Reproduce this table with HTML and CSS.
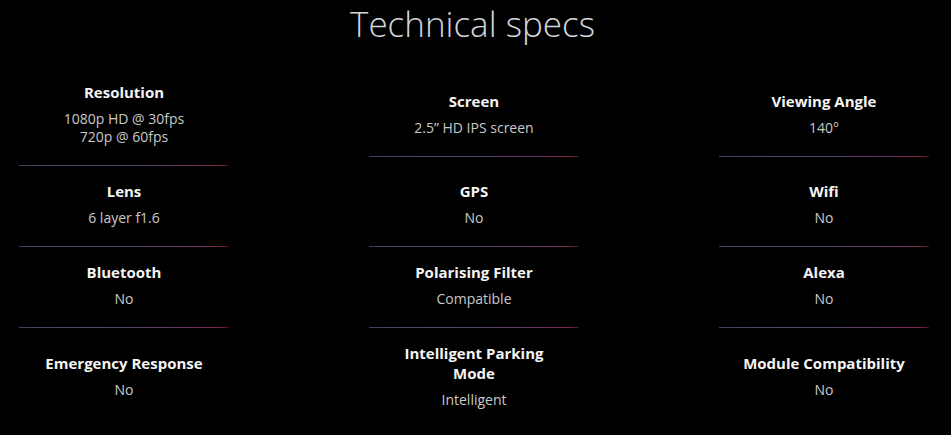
FILE: index.html
```html
<!DOCTYPE html>
<html lang="en">

<head>
    <meta charset="UTF-8">
    <meta name="viewport" content="width=device-width, initial-scale=1.0">
    <title>Technical specs</title>
    <link rel="stylesheet" href="styles.css">
</head>

<body>
    <h1 class="specs-title">Technical specs</h1>

    <div class="specs-grid">
        <div class="spec">
            <div class="spec__name">Resolution</div>
            <div class="spec__value">1080p HD @ 30fps<br>720p @ 60fps</div>
        </div>
        <div class="spec">
            <div class="spec__name">Screen</div>
            <div class="spec__value">2.5&rdquo; HD IPS screen</div>
        </div>
        <div class="spec">
            <div class="spec__name">Viewing Angle</div>
            <div class="spec__value">140&deg;</div>
        </div>

        <div class="spec">
            <div class="spec__name">Lens</div>
            <div class="spec__value">6 layer f1.6</div>
        </div>
        <div class="spec">
            <div class="spec__name">GPS</div>
            <div class="spec__value">No</div>
        </div>
        <div class="spec">
            <div class="spec__name">Wifi</div>
            <div class="spec__value">No</div>
        </div>

        <div class="spec">
            <div class="spec__name">Bluetooth</div>
            <div class="spec__value">No</div>
        </div>
        <div class="spec">
            <div class="spec__name">Polarising Filter</div>
            <div class="spec__value">Compatible</div>
        </div>
        <div class="spec">
            <div class="spec__name">Alexa</div>
            <div class="spec__value">No</div>
        </div>

        <div class="spec spec--last">
            <div class="spec__name">Emergency Response</div>
            <div class="spec__value">No</div>
        </div>
        <div class="spec spec--last">
            <div class="spec__name">Intelligent Parking Mode</div>
            <div class="spec__value">Intelligent</div>
        </div>
        <div class="spec spec--last">
            <div class="spec__name">Module Compatibility</div>
            <div class="spec__value">No</div>
        </div>
    </div>
</body>

</html>
```

FILE: styles.css
```css
body {
    margin: 0;
    background-color: #000000;
    font-family: "Open Sans", "Liberation Sans", sans-serif;
}

.specs-title {
    margin: 0;
    padding: 1px 6px 0 0;
    text-align: center;
    font-size: 35px;
    font-weight: 300;
    line-height: 46px;
    color: #d3d7dc;
}

.specs-grid {
    display: grid;
    grid-template-columns: repeat(3, 210px);
    column-gap: 140px;
    align-items: center;
    margin: 20px 0 0 19px;
}

.spec {
    text-align: center;
    padding: 15px 0 19px;
    border-bottom: 1px solid transparent;
    border-image: linear-gradient(to right, #40405a, #504c6a 30%, #5c4066 65%, #7e2150 95%, #3a1024);
    border-image-slice: 1;
}

.spec--last {
    border-bottom: none;
}

.spec__name {
    padding: 0 20px;
    font-size: 15px;
    font-weight: 700;
    line-height: 20px;
    color: #f4f4f4;
}

.spec__value {
    margin-top: 8px;
    font-size: 14px;
    line-height: 18px;
    color: #c9c9c9;
}
```
